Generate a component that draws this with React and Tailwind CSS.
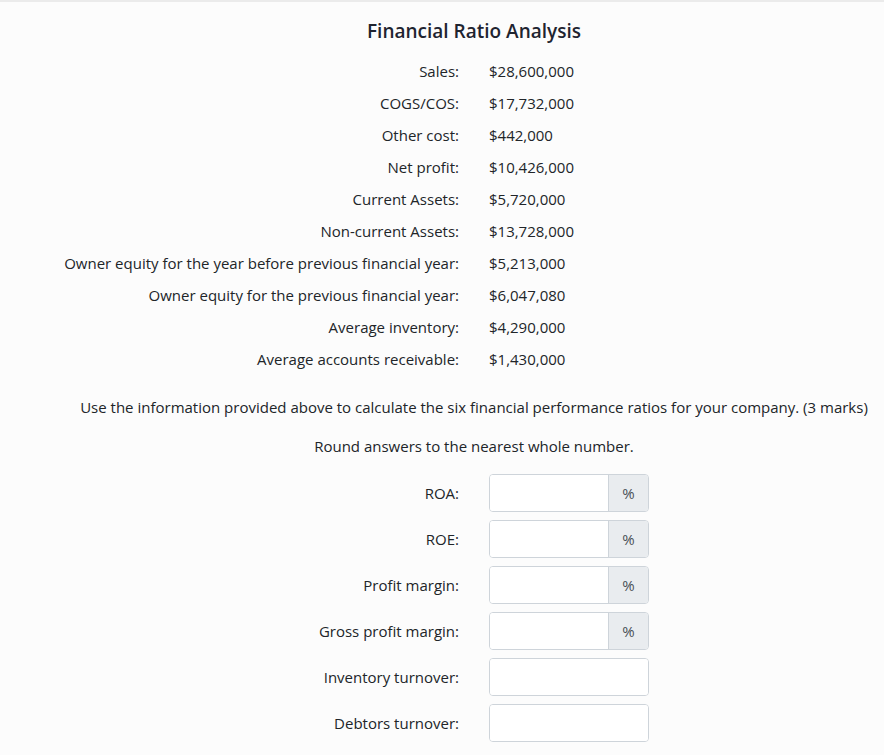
import React from 'react'

const figures = [
  ['Sales:', '$28,600,000'],
  ['COGS/COS:', '$17,732,000'],
  ['Other cost:', '$442,000'],
  ['Net profit:', '$10,426,000'],
  ['Current Assets:', '$5,720,000'],
  ['Non-current Assets:', '$13,728,000'],
  ['Owner equity for the year before previous financial year:', '$5,213,000'],
  ['Owner equity for the previous financial year:', '$6,047,080'],
  ['Average inventory:', '$4,290,000'],
  ['Average accounts receivable:', '$1,430,000'],
]

const ratios = [
  ['ROA:', true],
  ['ROE:', true],
  ['Profit margin:', true],
  ['Gross profit margin:', true],
  ['Inventory turnover:', false],
  ['Debtors turnover:', false],
]

export default function App() {
  return (
    <div className="w-[884px] h-[755px] overflow-hidden bg-[#fcfcfc] border-t-2 border-[#ebebeb] text-[#212529] text-[15px]" style={{ fontFamily: '"Open Sans", Lato, sans-serif' }}>
      <div className="w-[948px] pt-[17px]">
        <h1 className="text-center text-[19px] leading-[24px] font-semibold text-[#1f2430] mb-3">Financial Ratio Analysis</h1>
        <div className="grid grid-cols-2 gap-x-[30px]">
          {figures.map(([label, value]) => (
            <React.Fragment key={label}>
              <div className="h-8 flex items-center justify-end">{label}</div>
              <div className="h-8 flex items-center">{value}</div>
            </React.Fragment>
          ))}
        </div>
        <p className="text-center leading-[22px] mt-[21px]">Use the information provided above to calculate the six financial performance ratios for your company. (3 marks)</p>
        <p className="text-center leading-[22px] mt-[17px]">Round answers to the nearest whole number.</p>
        <div className="grid grid-cols-2 gap-x-[30px] gap-y-2 mt-[17px]">
          {ratios.map(([label, pct]) => (
            <React.Fragment key={label}>
              <div className="h-[38px] flex items-center justify-end">{label}</div>
              <div className="flex">
                <div className="flex w-[160px] h-[38px] border border-[#ced4da] rounded bg-white overflow-hidden">
                  <input className="flex-1 min-w-0 px-3 outline-none bg-white" />
                  {pct && (
                    <span className="w-10 flex items-center justify-center bg-[#e9ecef] border-l border-[#ced4da] text-[#495057]">%</span>
                  )}
                </div>
              </div>
            </React.Fragment>
          ))}
        </div>
      </div>
    </div>
  )
}
